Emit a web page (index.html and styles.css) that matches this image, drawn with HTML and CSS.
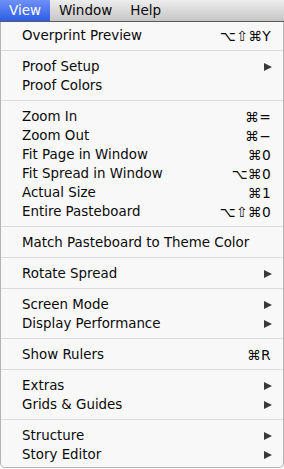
FILE: index.html
```html
<!DOCTYPE html>
<html lang="en">
  <head>
    <meta charset="UTF-8" />
    <meta name="viewport" content="width=device-width, initial-scale=1.0" />
    <title>View Menu</title>
    <link rel="stylesheet" href="styles.css">
  </head>
  <body>
    <div class="menubar">
      <span class="title active">View</span>
      <span class="title">Window</span>
      <span class="title">Help</span>
    </div>

    <ul class="menu">
      <li class="item"><span>Overprint Preview</span><span class="key">⌥⇧⌘Y</span></li>
      <li class="sep"></li>
      <li class="item"><span>Proof Setup</span><span class="arrow"></span></li>
      <li class="item"><span>Proof Colors</span></li>
      <li class="sep"></li>
      <li class="item"><span>Zoom In</span><span class="key">⌘=</span></li>
      <li class="item"><span>Zoom Out</span><span class="key">⌘−</span></li>
      <li class="item"><span>Fit Page in Window</span><span class="key">⌘0</span></li>
      <li class="item"><span>Fit Spread in Window</span><span class="key">⌥⌘0</span></li>
      <li class="item"><span>Actual Size</span><span class="key">⌘1</span></li>
      <li class="item"><span>Entire Pasteboard</span><span class="key">⌥⇧⌘0</span></li>
      <li class="sep"></li>
      <li class="item"><span>Match Pasteboard to Theme Color</span></li>
      <li class="sep"></li>
      <li class="item"><span>Rotate Spread</span><span class="arrow"></span></li>
      <li class="sep"></li>
      <li class="item"><span>Screen Mode</span><span class="arrow"></span></li>
      <li class="item"><span>Display Performance</span><span class="arrow"></span></li>
      <li class="sep"></li>
      <li class="item"><span>Show Rulers</span><span class="key">⌘R</span></li>
      <li class="sep"></li>
      <li class="item"><span>Extras</span><span class="arrow"></span></li>
      <li class="item"><span>Grids &amp; Guides</span><span class="arrow"></span></li>
      <li class="sep"></li>
      <li class="item"><span>Structure</span><span class="arrow"></span></li>
      <li class="item"><span>Story Editor</span><span class="arrow"></span></li>
    </ul>
  </body>
</html>
```

FILE: styles.css
```css
body {
  margin: 0;
  font-family: "DejaVu Sans", sans-serif;
  font-size: 13.4px;
  color: #0a0a0a;
  background-color: #ffffff;
}
.menubar {
  display: flex;
  height: 21px;
  background: linear-gradient(#ededed, #c6c6c6);
  border-bottom: 1px solid #5a5a5a;
}
.title {
  padding: 0 9px;
  line-height: 21px;
  font-size: 13.5px;
}
.title.active {
  color: #ffffff;
  background: linear-gradient(#6f90f6, #2c5de8);
}
.menu {
  list-style: none;
  margin: 0;
  padding: 4px 0 3px;
  background-color: #f8f8f8;
  border: 1px solid #b4b4b4;
  border-top: none;
  border-radius: 0 0 5px 5px;
}
.item {
  display: flex;
  align-items: center;
  justify-content: space-between;
  height: 19px;
  padding: 0 12px 0 21px;
}
.key {
  font-size: 13.8px;
  letter-spacing: 0.3px;
}
.arrow {
  width: 0;
  height: 0;
  margin-right: -1px;
  border-top: 4.5px solid transparent;
  border-bottom: 4.5px solid transparent;
  border-left: 8px solid #3a3a3a;
}
.sep {
  height: 1px;
  margin: 5px 0 6px;
  background-color: #dcdcdc;
}
```
